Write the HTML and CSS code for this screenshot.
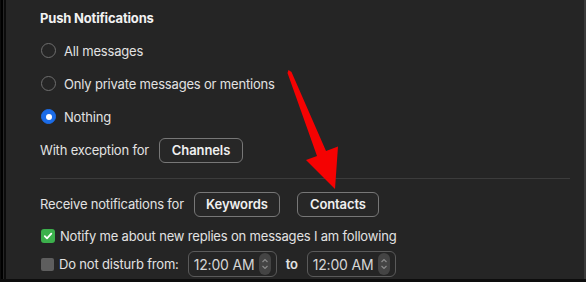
FILE: index.html
```html
<!DOCTYPE html>
<html lang="en">

<head>
    <meta charset="UTF-8">
    <meta name="viewport" content="width=device-width, initial-scale=1.0">
    <title>Notifications</title>

    <link rel="stylesheet" href="styles.css">
</head>

<body>
    <div class="window">
        <div class="panel">

            <div class="title">Push Notifications</div>

            <div class="radios">
                <label class="row radio-row">
                    <span class="radio"></span>
                    <span>All messages</span>
                </label>
                <label class="row radio-row">
                    <span class="radio"></span>
                    <span>Only private messages or mentions</span>
                </label>
                <label class="row radio-row">
                    <span class="radio radio--on"></span>
                    <span>Nothing</span>
                </label>
            </div>

            <div class="row row--exception">
                <span>With exception for</span>
                <button class="btn btn--channels">Channels</button>
            </div>

            <div class="divider"></div>

            <div class="row row--receive">
                <span>Receive notifications for</span>
                <button class="btn btn--keywords">Keywords</button>
                <button class="btn btn--contacts">Contacts</button>
            </div>

            <div class="row row--notify">
                <span class="check check--on">
                    <svg width="10" height="10" viewBox="0 0 10 10">
                        <path d="M1.8 5.2 L4 7.4 L8.3 2.6" fill="none" stroke="#fff" stroke-width="1.8" stroke-linecap="round" stroke-linejoin="round" />
                    </svg>
                </span>
                <span>Notify me about new replies on messages I am following</span>
            </div>

            <div class="row row--dnd">
                <span class="check check--off"></span>
                <span class="dnd-label">Do not disturb from:</span>
                <div class="time">
                    <span>12:00 AM</span>
                    <span class="stepper">
                        <svg width="8" height="16" viewBox="0 0 8 16">
                            <path d="M1.5 6 L4 3.5 L6.5 6 M1.5 10 L4 12.5 L6.5 10" fill="none" stroke="#8a8a8a" stroke-width="1.2" />
                        </svg>
                    </span>
                </div>
                <span class="to">to</span>
                <div class="time">
                    <span>12:00 AM</span>
                    <span class="stepper">
                        <svg width="8" height="16" viewBox="0 0 8 16">
                            <path d="M1.5 6 L4 3.5 L6.5 6 M1.5 10 L4 12.5 L6.5 10" fill="none" stroke="#8a8a8a" stroke-width="1.2" />
                        </svg>
                    </span>
                </div>
            </div>

        </div>

        <!-- annotation arrow drawn over the screenshot -->
        <svg class="arrow" width="586" height="282" viewBox="0 0 586 282">
            <polygon points="289.5,70 292.5,72 327,151 339,146.5 336,189 307,160 318,156 288.5,73" fill="#f50202" />
        </svg>
    </div>
</body>

</html>
```

FILE: styles.css
```css
html,
body {
    margin: 0;
    height: 100%;
    background-color: #0d0d0d;
}

body {
    font-family: Inter, "Liberation Sans", sans-serif;
    font-size: 13px;
    letter-spacing: -0.18px;
    color: #e2e2e2;
    overflow: hidden;
}

.window {
    position: relative;
    height: 279px;
    margin-left: 1px;
    border-left: 2px solid #000;
    padding-left: 1px;
    background-color: #262626;
    border-right: 2px solid #3a3a3a;
    box-sizing: border-box;
}

.panel {
    height: 100%;
    border-left: 2px solid #0c0c0c;
    background-color: #252525;
    padding-left: 34px;
    display: flex;
    flex-direction: column;
}

.title {
    margin-top: 8px;
    height: 20px;
    line-height: 20px;
    font-weight: 700;
    color: #f2f2f2;
}

.radios {
    margin-top: 6px;
    display: flex;
    flex-direction: column;
}

.row {
    display: flex;
    align-items: center;
}

.radio-row {
    height: 33px;
    gap: 8px;
}

.radio {
    width: 15px;
    height: 15px;
    box-sizing: border-box;
    border: 1px solid #6e6e6e;
    border-radius: 50%;
    margin-left: 1px;
    display: flex;
    align-items: center;
    justify-content: center;
}

.radio--on {
    background-color: #1b6ce8;
    border-color: #1b6ce8;
}

.radio--on::after {
    content: "";
    width: 6px;
    height: 6px;
    border-radius: 50%;
    background-color: #fff;
}

.row--exception {
    height: 34px;
    gap: 10px;
}

.btn {
    font-family: inherit;
    font-size: 13px;
    font-weight: 600;
    letter-spacing: -0.1px;
    color: #f0f0f0;
    background-color: #272727;
    border: 1px solid #777;
    border-radius: 6px;
    height: 25px;
    padding: 0;
}

.btn--channels {
    width: 84px;
}

.btn--keywords {
    width: 86px;
}

.btn--contacts {
    width: 82px;
    margin-left: 7px;
}

.divider {
    margin-top: 11px;
    height: 1px;
    width: 530px;
    background-color: #3c3c3c;
}

.row--receive {
    margin-top: 9px;
    height: 32px;
    gap: 10px;
}

.row--notify {
    height: 31px;
    gap: 5px;
}

.check {
    width: 14px;
    height: 14px;
    border-radius: 3px;
    margin-left: 1px;
    display: flex;
    align-items: center;
    justify-content: center;
}

.check--on {
    background-color: #3cb04c;
}

.check--off {
    width: 13px;
    height: 13px;
    background-color: #5e5e5e;
    border-radius: 2px;
}

.row--dnd {
    height: 26px;
}

.dnd-label {
    margin-left: 5px;
    margin-right: 9px;
}

.time {
    width: 89px;
    height: 26px;
    box-sizing: border-box;
    border: 1px solid #5a5a5a;
    border-radius: 6px;
    padding-left: 5px;
    padding-right: 5px;
    display: flex;
    align-items: center;
    justify-content: space-between;
    font-size: 14px;
    color: #d6d6d6;
}

.stepper {
    width: 12px;
    height: 22px;
    border-radius: 6px;
    background-color: #444;
    display: flex;
    align-items: center;
    justify-content: center;
}

.to {
    margin: 0 9px 0 9px;
    font-weight: 600;
}

.arrow {
    position: absolute;
    left: -4px;
    top: 0;
    pointer-events: none;
}
```
